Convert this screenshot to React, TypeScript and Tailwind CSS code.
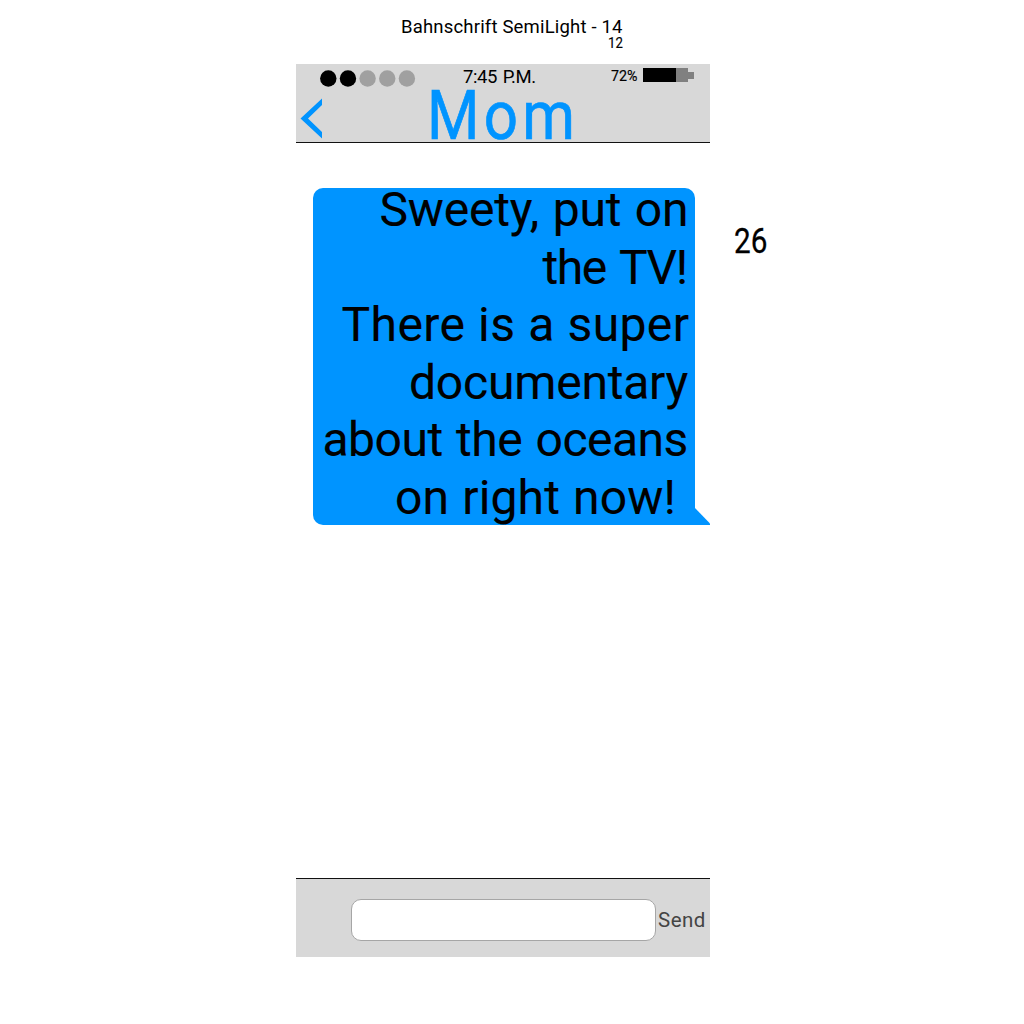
import React from "react";
import clsx from "clsx";

const lines = [
  { text: "Sweety, put on", style: "ml-[66.5px] tracking-[-0.2px] [word-spacing:2px]" },
  { text: "the TV!", style: "ml-[229.5px] tracking-[-1.5px] [word-spacing:4px]" },
  { text: "There is a super", style: "ml-[28.5px] tracking-[0.4px] [word-spacing:0.5px]" },
  { text: "documentary", style: "ml-[96px] tracking-[-0.2px]" },
  { text: "about the oceans", style: "ml-[9.5px] tracking-[-0.5px] [word-spacing:2px]" },
  { text: "on right now!", style: "ml-[82px] tracking-[0.15px] [word-spacing:1px]" },
];

const signal = [true, true, false, false, false];

function StatusBar() {
  return (
    <div className="flex h-[22px] items-start text-black">
      <svg className="ml-6 mt-1.5 h-[17px] w-[96px]" viewBox="0 0 96 17">
        {signal.map((on, i) => (
          <circle key={i} cx={8.3 + i * 19.65} cy={8.5} r={8.2} fill={on ? "#000" : "#a0a0a0"} />
        ))}
      </svg>
      <span className="ml-[47px] mt-[2.7px] h-[18px] w-[72px] whitespace-nowrap text-[18.5px] leading-5 tracking-[-0.4px] [word-spacing:1.5px]">
        7:45 P.M.
      </span>
      <span className="ml-[76px] mt-1 w-8 origin-left scale-x-[0.95] text-[15px] leading-4 [-webkit-text-stroke:0.15px]">
        72%
      </span>
      <div className="mt-1 flex items-center">
        <span className="h-3.5 w-[33px] bg-black" />
        <span className="h-3.5 w-3 bg-[#808080]" />
        <span className="h-[7px] w-1.5 bg-[#808080]" />
      </div>
    </div>
  );
}

function Header() {
  return (
    <header className="h-[79px] border-b border-[#111] bg-[#d8d8d8]">
      <StatusBar />
      <div className="flex h-14 items-start text-[#0094ff]">
        <svg className="ml-1 mt-3 h-[42px] w-[22px]" viewBox="0 0 22 42" fill="currentColor">
          <path d="M22 .5 .5 20.5 22 40.5V34L8 20.5 22 7Z" />
        </svg>
        <h1 className="ml-[105px] origin-left scale-x-[0.87] text-[69px] leading-[59px] tracking-[5px] [-webkit-text-stroke:0.7px]">
          Mom
        </h1>
      </div>
    </header>
  );
}

function Bubble() {
  return (
    <div className="relative ml-[17px] mt-[45px] h-[337px] w-[382px] rounded-[10px] rounded-br-none bg-[#0094ff] text-black">
      <div className="flex flex-col">
        {lines.map((l, i) => (
          <span
            key={l.text}
            className={clsx(
              "h-[57.5px] whitespace-nowrap text-[48px] leading-[57.5px] [-webkit-text-stroke:0.15px]",
              i === 0 && "-mt-[6.6px]",
              l.style,
            )}
          >
            {l.text}
          </span>
        ))}
      </div>
      <svg className="absolute bottom-0 left-full h-[17px] w-[15px]" viewBox="0 0 15 17" fill="#0094ff">
        <path d="M0 0 15 15.5V17H0Z" />
      </svg>
    </div>
  );
}

function Composer() {
  return (
    <footer className="flex h-[79px] items-start border-t border-[#111] bg-[#d8d8d8]">
      <div className="ml-[55px] mt-5 h-[42px] w-[305px] rounded-[10px] border border-[#a6a6a6] bg-white" />
      <span className="ml-[2px] mt-[29px] text-[20.5px] leading-6 tracking-[0.5px] text-[#444]">Send</span>
    </footer>
  );
}

export default function App() {
  return (
    <div className="h-[1024px] w-[1024px] overflow-hidden bg-white font-['Roboto',sans-serif] text-black">
      <div className="ml-[401px] flex h-16 w-[222px] flex-col pt-[16.7px]">
        <span className="whitespace-nowrap text-[18.5px] leading-5 tracking-[0.18px]">Bahnschrift SemiLight - 14</span>
        <span className="-mt-[2px] ml-[207px] w-4 origin-left scale-x-[0.88] text-[15px] leading-4 [-webkit-text-stroke:0.15px]">
          12
        </span>
      </div>
      <div className="flex">
        <main className="ml-[296px] flex h-[893px] w-[414px] flex-col justify-between">
          <div>
            <Header />
            <Bubble />
          </div>
          <Composer />
        </main>
        <span className="ml-[23.5px] mt-[157px] h-10 origin-left scale-x-[0.86] text-[34.5px] leading-10 [-webkit-text-stroke:0.3px]">
          26
        </span>
      </div>
    </div>
  );
}
